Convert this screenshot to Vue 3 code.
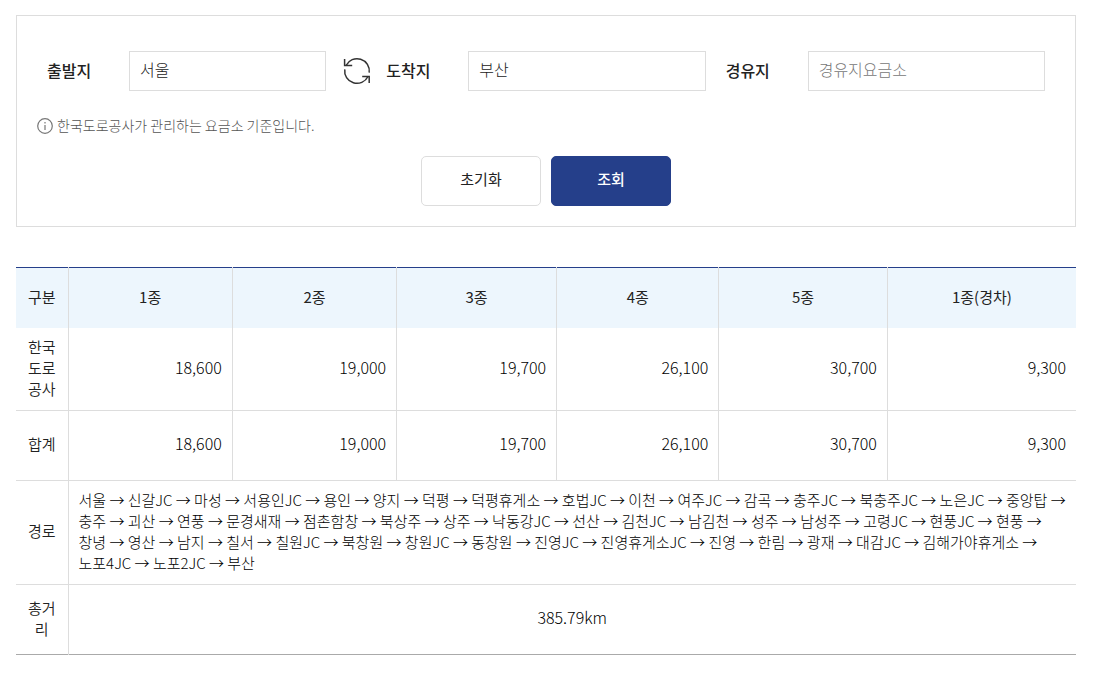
<script setup>
import { ref } from 'vue'

const origin = ref('서울')
const destination = ref('부산')
const waypoint = ref('')

const carTypes = ['1종', '2종', '3종', '4종', '5종', '1종(경차)']

const tolls = ref([
	{ name: '한국도로공사', prices: [18600, 19000, 19700, 26100, 30700, 9300] },
	{ name: '합계', prices: [18600, 19000, 19700, 26100, 30700, 9300] }
])

const route = ref([
	'서울', '신갈JC', '마성', '서용인JC', '용인', '양지', '덕평', '덕평휴게소', '호법JC', '이천', '여주JC', '감곡', '충주JC', '북충주JC', '노은JC', '중앙탑',
	'충주', '괴산', '연풍', '문경새재', '점촌함창', '북상주', '상주', '낙동강JC', '선산', '김천JC', '남김천', '성주', '남성주', '고령JC', '현풍JC', '현풍',
	'창녕', '영산', '남지', '칠서', '칠원JC', '북창원', '창원JC', '동창원', '진영JC', '진영휴게소JC', '진영', '한림', '광재', '대감JC', '김해가야휴게소',
	'노포4JC', '노포2JC', '부산'
])

const distance = ref(385.79)

const swap = () => {
	const from = origin.value
	origin.value = destination.value
	destination.value = from
}

const resetForm = () => {
	origin.value = ''
	destination.value = ''
	waypoint.value = ''
}
</script>

<template>
	<main class="page">
		<form class="search" @submit.prevent>
			<div class="fields">
				<div class="field">
					<label for="origin">출발지</label>
					<input id="origin" v-model="origin" type="text" class="input" />
					<button type="button" class="swap" aria-label="출발지 도착지 변경" @click="swap">
						<svg viewBox="0 0 28 28" width="28" height="28" fill="none" stroke="#333" stroke-width="1.5">
							<path d="M3 8.5A12.3 12.3 0 0 1 26.2 15.7" />
							<path d="M1.8 12.3A12.3 12.3 0 0 0 25 19.5" />
							<path d="M1.6 2v6.5h7.6" />
							<path d="M19.2 19.5h7V26" />
						</svg>
					</button>
				</div>
				<div class="field">
					<label for="destination">도착지</label>
					<input id="destination" v-model="destination" type="text" class="input" />
				</div>
				<div class="field">
					<label for="waypoint">경유지</label>
					<input id="waypoint" v-model="waypoint" type="text" placeholder="경유지요금소" class="input" />
				</div>
			</div>

			<p class="notice">
				<svg viewBox="0 0 16 16" width="16" height="16" fill="none" stroke="#777">
					<circle cx="8" cy="8" r="7.3" stroke-width="1.2" />
					<path d="M8 4v1.6M8 7v5" stroke-width="1.2" />
				</svg>
				한국도로공사가 관리하는 요금소 기준입니다.
			</p>

			<div class="buttons">
				<button type="button" class="btn" @click="resetForm">초기화</button>
				<button type="submit" class="btn btn-primary">조회</button>
			</div>
		</form>

		<table class="table">
			<colgroup>
				<col class="col-name" />
				<col class="col-wide" />
				<col class="col-wide" />
				<col class="col-small" />
				<col class="col-mid" />
				<col class="col-large" />
				<col />
			</colgroup>
			<thead>
				<tr>
					<th scope="col">구분</th>
					<th v-for="type in carTypes" :key="type" scope="col">{{ type }}</th>
				</tr>
			</thead>
			<tbody>
				<tr v-for="row in tolls" :key="row.name">
					<th scope="row">{{ row.name }}</th>
					<td v-for="(price, i) in row.prices" :key="i" class="price">{{ price.toLocaleString('en-US') }}</td>
				</tr>
				<tr>
					<th scope="row">경로</th>
					<td colspan="6" class="route">{{ route.join(' → ') }}</td>
				</tr>
				<tr>
					<th scope="row">총거리</th>
					<td colspan="6" class="distance">{{ distance }}km</td>
				</tr>
			</tbody>
		</table>
	</main>
</template>

<style>
body { background: #fff; }
</style>

<style scoped>
.page { padding: 15px 19px 18px 16px; font-family: "Noto Sans CJK KR", "Noto Sans", sans-serif; font-size: 15px; line-height: 21px; color: #222; }
.page * { box-sizing: border-box; }
.page input, .page button { font-family: inherit; }

/* Search form */
.search { border: 1px solid #ddd; padding: 35px 20px 20px; }
.fields { display: grid; grid-template-columns: repeat(3, 1fr); }
.field { display: flex; align-items: center; padding: 0 10px; }
.field label { flex: 0 0 82px; padding-bottom: 2px; font-size: 16px; font-weight: 500; }
.input { flex: 1; min-width: 0; height: 40px; border: 1px solid #ddd; border-radius: 0; padding: 0 10px 4px; background: #fff; font-size: 16px; font-weight: 300; color: #222; }
.input::placeholder { color: #777; opacity: 1; }
.input:focus { outline: none; border-color: #253f8a; }
.swap { display: flex; flex: none; margin: 0 -5px 0 17px; border: 0; padding: 0; background: none; cursor: pointer; }

.notice { display: flex; align-items: center; gap: 4px; margin: 24px 0 20px; font-size: 14px; font-weight: 300; color: #555; }

.buttons { display: flex; justify-content: center; gap: 10px; }
.btn { width: 120px; height: 50px; border: 1px solid #ddd; border-radius: 5px; padding: 0 0 6px; background: #fff; font-size: 15px; color: #222; cursor: pointer; }
.btn-primary { border-color: #253f8a; background: #253f8a; font-weight: 500; color: #fff; }

/* Toll table */
.table { width: 100%; margin-top: 40px; border-collapse: collapse; table-layout: fixed; border-top: 1px solid #253f8a; border-bottom: 1px solid #aaa; }
.col-name { width: 52px; }
.col-wide { width: 15.5%; }
.col-small { width: 15.1%; }
.col-mid { width: 15.3%; }
.col-large { width: 15.9%; }
.table th, .table td { height: 70px; padding: 8px 10px 11px; border-left: 1px solid #ddd; font-weight: 300; }
.table th:first-child { border-left: 0; }
.table tbody tr + tr > * { border-top: 1px solid #ddd; }
.table thead th { height: 60px; background: #edf6fd; font-weight: 400; }
.table tbody th { font-weight: 350; word-break: break-all; }
.table td { color: #000; }
.table .price { text-align: right; font-size: 16px; }
.table .route { padding-right: 6px; text-align: left; word-break: keep-all; }
.table .distance { text-align: center; font-size: 16px; }
</style>
